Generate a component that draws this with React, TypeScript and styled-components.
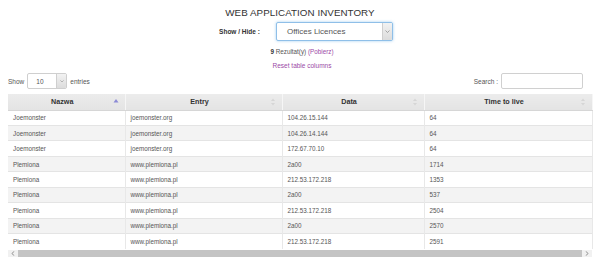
import React from "react";
import styled, { createGlobalStyle } from "styled-components";

const GlobalStyle = createGlobalStyle`
    html, body {
        margin: 0;
        padding: 0;
        background: #ffffff;
    }
    body {
        font-family: "Liberation Sans", Arial, sans-serif;
        color: #555;
    }
`;

type Row = { name: string; entry: string; data: string; ttl: string };

const rows: Row[] = [
    { name: "Joemonster", entry: "joemonster.org", data: "104.26.15.144", ttl: "64" },
    { name: "Joemonster", entry: "joemonster.org", data: "104.26.14.144", ttl: "64" },
    { name: "Joemonster", entry: "joemonster.org", data: "172.67.70.10", ttl: "64" },
    { name: "Plemiona", entry: "www.plemiona.pl", data: "2a00", ttl: "1714" },
    { name: "Plemiona", entry: "www.plemiona.pl", data: "212.53.172.218", ttl: "1353" },
    { name: "Plemiona", entry: "www.plemiona.pl", data: "2a00", ttl: "537" },
    { name: "Plemiona", entry: "www.plemiona.pl", data: "212.53.172.218", ttl: "2504" },
    { name: "Plemiona", entry: "www.plemiona.pl", data: "2a00", ttl: "2570" },
    { name: "Plemiona", entry: "www.plemiona.pl", data: "212.53.172.218", ttl: "2591" },
];

const columns = [
    { label: "Nazwa", width: 117, sorted: true },
    { label: "Entry", width: 157, sorted: false },
    { label: "Data", width: 142, sorted: false },
    { label: "Time to live", width: 168, sorted: false },
];

// Layout
const Page = styled.div`
    width: 600px;
    height: 257px;
    overflow: hidden;
    display: flex;
    flex-direction: column;
`;

const Title = styled.h1`
    margin: 0;
    padding-top: 7px;
    height: 16px;
    font-size: 9.8px;
    font-weight: normal;
    line-height: 12px;
    color: #333;
    text-align: center;
    letter-spacing: 0.05px;
`;

const FilterRow = styled.div`
    display: flex;
    justify-content: center;
    align-items: center;
    gap: 16px;
    padding-left: 12px;
    height: 19px;
`;

const FilterLabel = styled.label`
    font-size: 6.5px;
    font-weight: bold;
    color: #333;
`;

const SelectBox = styled.div<{ $w: number; $h: number; $glow?: boolean }>`
    position: relative;
    box-sizing: border-box;
    width: ${(p) => p.$w}px;
    height: ${(p) => p.$h}px;
    display: flex;
    align-items: center;
    border: 1px solid ${(p) => (p.$glow ? "#8fbfe8" : "#cfcfcf")};
    border-radius: 2px;
    box-shadow: ${(p) => (p.$glow ? "0 0 3px rgba(102, 175, 233, 0.6)" : "none")};
    background: #fff;
    overflow: hidden;
`;

const SelectText = styled.span<{ $size: number; $pad: number }>`
    flex: 1;
    padding-left: ${(p) => p.$pad}px;
    font-size: ${(p) => p.$size}px;
    color: #555;
`;

const SelectArrow = styled.span`
    align-self: stretch;
    width: 9px;
    display: flex;
    align-items: center;
    justify-content: center;
    background: linear-gradient(#f2f2f2, #dcdcdc);
    border-left: 1px solid #cfcfcf;
`;

const Summary = styled.div`
    margin-top: 7px;
    height: 8px;
    text-align: center;
    font-size: 6.3px;
    line-height: 8px;
    padding-left: 4px;
    color: #555;
`;

const Count = styled.b`
    color: #333;
`;

const Link = styled.a`
    color: #9b4aa6;
    text-decoration: none;
`;

const ResetRow = styled.div`
    margin-top: 6px;
    height: 8px;
    text-align: center;
    font-size: 6.5px;
    line-height: 8px;
    padding-left: 4px;
`;

const Toolbar = styled.div`
    margin-top: 3px;
    height: 16px;
    padding: 0 17px 0 8px;
    display: flex;
    justify-content: space-between;
    align-items: center;
    font-size: 6.5px;
    color: #555;
`;

const ToolGroup = styled.div`
    display: flex;
    align-items: center;
    gap: 3px;
`;

const SearchInput = styled.div`
    box-sizing: border-box;
    width: 82px;
    height: 16px;
    border: 1px solid #d0d0d0;
    border-radius: 2px;
    background: #fff;
`;

const TableWrap = styled.div`
    margin: 5px 8px 0;
    width: 584px;
`;

const Table = styled.table`
    width: 584px;
    border-collapse: collapse;
    table-layout: fixed;
`;

const Th = styled.th`
    position: relative;
    height: 16px;
    padding: 0 12px 0 4px;
    box-sizing: border-box;
    background: linear-gradient(#ececec, #e4e4e4);
    border-right: 1px solid #f6f6f6;
    border-bottom: 1px solid #d6d6d6;
    font-size: 7.2px;
    font-weight: bold;
    color: #333;
    text-align: center;
`;

const SortIcon = styled.svg`
    position: absolute;
    right: 6px;
    top: 4px;
`;

const Tr = styled.tr<{ $odd: boolean }>`
    background: ${(p) => (p.$odd ? "#f3f3f3" : "#ffffff")};
`;

const Td = styled.td`
    height: 15.45px;
    padding: 0 5px;
    box-sizing: border-box;
    border-top: 1px solid #e4e4e4;
    border-right: 1px solid #e8e8e8;
    font-size: 6.3px;
    color: #555;
    white-space: nowrap;
    overflow: hidden;
`;

const ScrollBar = styled.div`
    margin-top: 1px;
    height: 7px;
    display: flex;
    align-items: stretch;
    background: #f1f1f1;
`;

const ScrollButton = styled.span`
    width: 10px;
    display: flex;
    align-items: center;
    justify-content: center;
`;

const ScrollThumb = styled.div`
    flex: 1;
    background: #c4c4c4;
`;

const Chevron: React.FC<{ size?: number }> = ({ size = 5 }) => (
    <svg width={size} height={size * 0.6} viewBox="0 0 10 6">
        <polyline points="1,1 5,5 9,1" fill="none" stroke="#888" strokeWidth="1.4" />
    </svg>
);

const SortMark: React.FC<{ active: boolean }> = ({ active }) =>
    active ? (
        <SortIcon width="6" height="8" viewBox="0 0 6 8">
            <polygon points="3,1 5.5,4.5 0.5,4.5" fill="#8c8ad6" />
        </SortIcon>
    ) : (
        <SortIcon width="6" height="8" viewBox="0 0 6 8">
            <polygon points="3,0.5 5,3 1,3" fill="#d6d6d6" />
            <polygon points="3,7.5 5,5 1,5" fill="#d6d6d6" />
        </SortIcon>
    );

const ArrowGlyph: React.FC<{ dir: "left" | "right" }> = ({ dir }) => (
    <svg width="4" height="5" viewBox="0 0 4 6">
        <polyline
            points={dir === "left" ? "3,0.5 1,3 3,5.5" : "1,0.5 3,3 1,5.5"}
            fill="none"
            stroke="#777"
            strokeWidth="1"
        />
    </svg>
);

const App: React.FC = () => {
    return (
        <>
            <GlobalStyle />
            <Page>
                <Title>WEB APPLICATION INVENTORY</Title>

                <FilterRow>
                    <FilterLabel>Show / Hide :</FilterLabel>
                    <SelectBox $w={117} $h={19} $glow>
                        <SelectText $size={8} $pad={10}>Offices Licences</SelectText>
                        <SelectArrow>
                            <Chevron />
                        </SelectArrow>
                    </SelectBox>
                </FilterRow>

                <Summary>
                    <Count>9</Count> Rezultat(y) <Link href="#">(Pobierz)</Link>
                </Summary>
                <ResetRow>
                    <Link href="#">Reset table columns</Link>
                </ResetRow>

                <Toolbar>
                    <ToolGroup>
                        <span>Show</span>
                        <SelectBox $w={40} $h={16}>
                            <SelectText $size={6.5} $pad={8}>10</SelectText>
                            <SelectArrow>
                                <Chevron size={4} />
                            </SelectArrow>
                        </SelectBox>
                        <span>entries</span>
                    </ToolGroup>
                    <ToolGroup>
                        <span>Search :</span>
                        <SearchInput />
                    </ToolGroup>
                </Toolbar>

                <TableWrap>
                    <Table>
                        <colgroup>
                            {columns.map((c) => (
                                <col key={c.label} style={{ width: c.width }} />
                            ))}
                        </colgroup>
                        <thead>
                            <tr>
                                {columns.map((c) => (
                                    <Th key={c.label}>
                                        {c.label}
                                        <SortMark active={c.sorted} />
                                    </Th>
                                ))}
                            </tr>
                        </thead>
                        <tbody>
                            {rows.map((r, i) => (
                                <Tr key={i} $odd={i % 2 === 1}>
                                    <Td>{r.name}</Td>
                                    <Td>{r.entry}</Td>
                                    <Td>{r.data}</Td>
                                    <Td>{r.ttl}</Td>
                                </Tr>
                            ))}
                        </tbody>
                    </Table>
                    <ScrollBar>
                        <ScrollButton>
                            <ArrowGlyph dir="left" />
                        </ScrollButton>
                        <ScrollThumb />
                        <ScrollButton>
                            <ArrowGlyph dir="right" />
                        </ScrollButton>
                    </ScrollBar>
                </TableWrap>
            </Page>
        </>
    );
};

export default App;
